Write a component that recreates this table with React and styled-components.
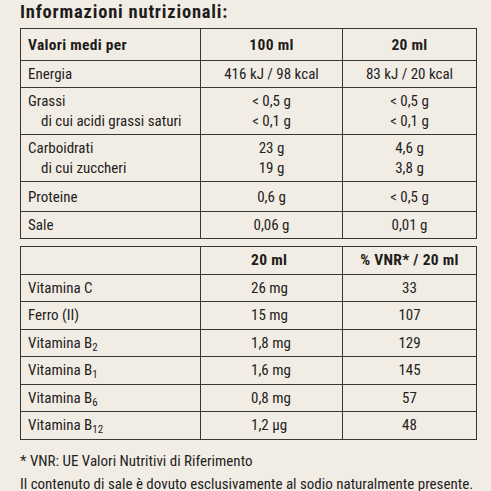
import React from 'react'
import styled, { createGlobalStyle } from 'styled-components'

const GlobalStyle = createGlobalStyle`
  html, body {
    margin: 0;
    padding: 0;
    background: #f2ede4;
  }
  body {
    font-family: "Roboto Condensed", "DejaVu Sans Condensed", sans-serif;
    color: #23211e;
  }
`

const nutrients = [
  { label: ['Energia'], a: ['416 kJ / 98 kcal'], b: ['83 kJ / 20 kcal'] },
  {
    label: ['Grassi', 'di cui acidi grassi saturi'],
    a: ['< 0,5 g', '< 0,1 g'],
    b: ['< 0,5 g', '< 0,1 g'],
  },
  {
    label: ['Carboidrati', 'di cui zuccheri'],
    a: ['23 g', '19 g'],
    b: ['4,6 g', '3,8 g'],
  },
  { label: ['Proteine'], a: ['0,6 g'], b: ['< 0,5 g'], tall: true },
  { label: ['Sale'], a: ['0,06 g'], b: ['0,01 g'] },
]

const vitamins = [
  { name: 'Vitamina C', amount: '26 mg', vnr: '33' },
  { name: 'Ferro (II)', amount: '15 mg', vnr: '107' },
  { name: 'Vitamina B', sub: '2', amount: '1,8 mg', vnr: '129' },
  { name: 'Vitamina B', sub: '1', amount: '1,6 mg', vnr: '145' },
  { name: 'Vitamina B', sub: '6', amount: '0,8 mg', vnr: '57' },
  { name: 'Vitamina B', sub: '12', amount: '1,2 µg', vnr: '48' },
]

const Columns = () => (
  <colgroup>
    <col style={{ width: 180 }} />
    <col style={{ width: 142 }} />
    <col style={{ width: 134 }} />
  </colgroup>
)

const App = () => (
  <Page>
    <GlobalStyle />
    <Title>Informazioni nutrizionali:</Title>

    <Table>
      <Columns />
      <tbody>
        <HeadRow>
          <HeadCell>Valori medi per</HeadCell>
          <HeadCell $center>100 ml</HeadCell>
          <HeadCell $center>20 ml</HeadCell>
        </HeadRow>
        {nutrients.map((n) => (
          <Row key={n.label[0]} $lines={n.label.length} $tall={n.tall}>
            <Cell>
              {n.label.map((l, i) => (
                <Line key={l} $indent={i > 0}>
                  {l}
                </Line>
              ))}
            </Cell>
            <Cell $center>
              {n.a.map((v, i) => (
                <Line key={i}>{v}</Line>
              ))}
            </Cell>
            <Cell $center>
              {n.b.map((v, i) => (
                <Line key={i}>{v}</Line>
              ))}
            </Cell>
          </Row>
        ))}
      </tbody>
    </Table>

    <Table>
      <Columns />
      <tbody>
        <VitRow>
          <HeadCell />
          <HeadCell $left={50}>20 ml</HeadCell>
          <HeadCell $center>% VNR* / 20 ml</HeadCell>
        </VitRow>
        {vitamins.map((v) => (
          <VitRow key={v.name + (v.sub || '')}>
            <Cell>
              {v.name}
              {v.sub && <Sub>{v.sub}</Sub>}
            </Cell>
            <Cell $left={50}>{v.amount}</Cell>
            <Cell $center>{v.vnr}</Cell>
          </VitRow>
        ))}
      </tbody>
    </Table>

    <Note>* VNR: UE Valori Nutritivi di Riferimento</Note>
    <Note $tight>
      Il contenuto di sale è dovuto esclusivamente al sodio naturalmente
      presente.
    </Note>
  </Page>
)

const Page = styled.div`
  width: 491px;
  height: 491px;
  overflow: hidden;
  box-sizing: border-box;
  padding: 0 15px 0 20px;
`

const Title = styled.h1`
  margin: 0;
  height: 28px;
  font-size: 18.5px;
  letter-spacing: 0.8px;
  line-height: 24px;
  font-weight: 700;
  color: #1e1c1a;
  white-space: nowrap;
`

const Table = styled.table`
  width: 456px;
  table-layout: fixed;
  border-collapse: collapse;
  border: 1.5px solid #2f2b28;
  margin-bottom: 7px;
  font-size: 15px;
`

const HeadRow = styled.tr`
  height: 32px;
`

const Row = styled.tr`
  height: ${(p) => (p.$lines > 1 ? 47 : p.$tall ? 30 : 27)}px;
`

const VitRow = styled.tr`
  height: 27.5px;
`

const Cell = styled.td`
  border: 1px solid #3a3633;
  padding: 0 ${(p) => (p.$center ? 0 : 7)}px 0
    ${(p) => (p.$center ? 0 : p.$left || 7)}px;
  text-align: ${(p) => (p.$center ? 'center' : 'left')};
  vertical-align: middle;
  line-height: 20px;
  white-space: nowrap;
`

const HeadCell = styled(Cell)`
  font-size: 15.5px;
  letter-spacing: 0.3px;
  font-weight: 700;
  color: #1e1c1a;
`

const Line = styled.div`
  padding-left: ${(p) => (p.$indent ? 13 : 0)}px;
`

const Sub = styled.sub`
  font-size: 11px;
  vertical-align: -3px;
  line-height: 0;
`

const Note = styled.p`
  margin: ${(p) => (p.$tight ? 7 : 13)}px 0 0;
  font-size: 15px;
  line-height: 16px;
  white-space: nowrap;
`

export default App
